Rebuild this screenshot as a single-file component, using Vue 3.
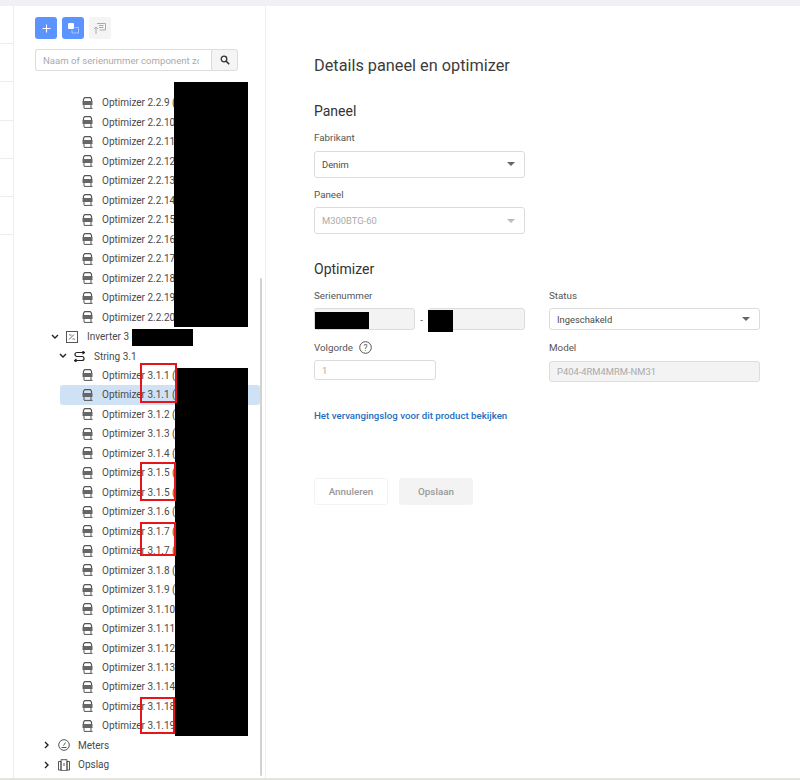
<script setup>
const tail = (prefix, from, to) => {
  const out = []
  for (let i = from; i <= to; i++) out.push(`Optimizer ${prefix}.${i}`)
  return out
}
const group1 = tail('2.2', 9, 20)
const group2 = [
  'Optimizer 3.1.1', 'Optimizer 3.1.1', 'Optimizer 3.1.2', 'Optimizer 3.1.3', 'Optimizer 3.1.4',
  'Optimizer 3.1.5', 'Optimizer 3.1.5', 'Optimizer 3.1.6', 'Optimizer 3.1.7', 'Optimizer 3.1.7',
  'Optimizer 3.1.8', 'Optimizer 3.1.9', 'Optimizer 3.1.10', 'Optimizer 3.1.11', 'Optimizer 3.1.12',
  'Optimizer 3.1.13', 'Optimizer 3.1.14', 'Optimizer 3.1.18', 'Optimizer 3.1.19'
]
const redactions = [
  { left: 174, top: 82, width: 74, height: 245 },
  { left: 132, top: 329, width: 61, height: 17 },
  { left: 175, top: 368, width: 73, height: 368 },
  { left: 315, top: 312, width: 54, height: 17 },
  { left: 428, top: 310, width: 25, height: 22 }
]
const marks = [
  { left: 140, top: 363, width: 37, height: 40 },
  { left: 140, top: 462, width: 36, height: 39 },
  { left: 140, top: 522, width: 36, height: 34 },
  { left: 140, top: 697, width: 35, height: 37 }
]
const box = (r) => ({ left: r.left + 'px', top: r.top + 'px', width: r.width + 'px', height: r.height + 'px' })
</script>

<template>
  <div class="page">
    <div class="topbar"></div>
    <div class="body">
      <div class="rail">
        <div class="rail-cell"></div>
        <div class="rail-cell"></div>
        <div class="rail-cell"></div>
        <div class="rail-cell"></div>
        <div class="rail-cell"></div>
        <div class="rail-cell"></div>
      </div>

      <aside class="side">
        <div class="tools">
          <button class="tool blue plus">
            <svg width="9" height="9" viewBox="0 0 9 9"><path d="M4.500 0.500v8M0.500 4.500h8" stroke="#fff" stroke-width="1.100" /></svg>
          </button>
          <button class="tool blue">
            <svg width="11" height="11" viewBox="0 0 11 11">
              <rect x="0" y="0" width="6" height="6" rx="1" fill="#fff" />
              <path d="M6.500 4.500h4v5.500h-6.500V7" fill="none" stroke="#fff" stroke-width="1" opacity=".45" />
            </svg>
          </button>
          <button class="tool grey">
            <svg width="12" height="11" viewBox="0 0 12 11">
              <path d="M3 .500h8.500v6.500H5.500" fill="none" stroke="#aaa" stroke-width="1" />
              <path d="M2 11V4.500M0 6l2-2 2 2M5 2.500h4.500M5 4.500h4.500" fill="none" stroke="#aaa" stroke-width="1" />
            </svg>
          </button>
        </div>
        <div class="search">
          <input class="search-input" placeholder="Naam of serienummer component zoeken" />
          <span class="search-btn">
            <svg width="10" height="10" viewBox="0 0 10 10">
              <circle cx="4" cy="4" r="2.800" fill="none" stroke="#333" stroke-width="1.300" />
              <path d="M6 6l3.200 3.200" stroke="#333" stroke-width="1.600" />
            </svg>
          </span>
        </div>

        <div class="tree">
          <div v-for="n in group1" :key="n" class="row leaf">
            <svg class="opt" width="11" height="12" viewBox="0 0 11 12">
              <path d="M1.500 4.500V2.200L2.700.700h5.600L9.500 2.200v2.300" fill="none" stroke="#555" stroke-width="1.200" />
              <rect x="0.500" y="4" width="10" height="4" fill="#666" />
              <path d="M2 8v3M9 8v3M2 11.400h8.500" fill="none" stroke="#555" stroke-width="1" />
            </svg>
            <span>{{ n }} (7</span>
          </div>

          <div class="row inverter">
            <svg class="chev" width="8" height="6" viewBox="0 0 8 6"><path d="M1 1l3 3 3-3" fill="none" stroke="#222" stroke-width="1.400" /></svg>
            <svg class="inv" width="12" height="12" viewBox="0 0 12 12">
              <rect x=".5" y=".5" width="11" height="11" fill="none" stroke="#555" />
              <path d="M3 8.500l5-5M3 4c1-1 1.500 1 2.500 0M6.500 8c1-1 1.500 1 2.500 0" fill="none" stroke="#555" stroke-width=".9" />
            </svg>
            <span>Inverter 3 (</span>
          </div>

          <div class="row string">
            <svg class="chev" width="8" height="6" viewBox="0 0 8 6"><path d="M1 1l3 3 3-3" fill="none" stroke="#222" stroke-width="1.400" /></svg>
            <svg class="str" width="11" height="11" viewBox="0 0 11 11">
              <path d="M10.500 1.500H3a1.800 1.800 0 0 0 0 4h5a1.800 1.800 0 0 1 0 4H.5M8.500 0l2 1.500-2 1.500M2.500 8l-2 1.500 2 1.500" fill="none" stroke="#222" stroke-width="1.200" />
            </svg>
            <span>String 3.1</span>
          </div>

          <div v-for="(n, i) in group2" :key="i" class="row leaf" :class="{ active: i === 1 }">
            <svg class="opt" width="11" height="12" viewBox="0 0 11 12">
              <path d="M1.500 4.500V2.200L2.700.700h5.600L9.500 2.200v2.300" fill="none" stroke="#555" stroke-width="1.200" />
              <rect x="0.500" y="4" width="10" height="4" fill="#666" />
              <path d="M2 8v3M9 8v3M2 11.400h8.500" fill="none" stroke="#555" stroke-width="1" />
            </svg>
            <span>{{ n }}{{ i < 12 ? ' (7' : '' }}</span>
          </div>

          <div class="row root">
            <svg class="chev-r" width="6" height="8" viewBox="0 0 6 8"><path d="M1 1l3 3-3 3" fill="none" stroke="#222" stroke-width="1.400" /></svg>
            <svg class="rooticon" width="12" height="12" viewBox="0 0 12 12">
              <circle cx="6" cy="6" r="5.300" fill="none" stroke="#555" />
              <path d="M3.500 8.500h5M5.500 6.500l2-3" fill="none" stroke="#555" />
            </svg>
            <span>Meters</span>
          </div>
          <div class="row root">
            <svg class="chev-r" width="6" height="8" viewBox="0 0 6 8"><path d="M1 1l3 3-3 3" fill="none" stroke="#222" stroke-width="1.400" /></svg>
            <svg class="rooticon" width="12" height="12" viewBox="0 0 12 12">
              <path d="M3 2.500H.5v8.500H3zM3 .7h6v11H3zM9 2.500h2.500v8.500H9zM6 4v3" fill="none" stroke="#555" />
            </svg>
            <span>Opslag</span>
          </div>
        </div>

        <div class="scrollbar"></div>
      </aside>

      <main class="main">
        <h1>Details paneel en optimizer</h1>

        <h2>Paneel</h2>
        <div class="narrow">
          <label>Fabrikant</label>
          <div class="field select">Denim<i class="caret"></i></div>
          <label class="second">Paneel</label>
          <div class="field select muted lower">M300BTG-60<i class="caret light"></i></div>
        </div>

        <h2 class="opt-title">Optimizer</h2>
        <div class="cols">
          <div class="col">
            <label>Serienummer</label>
            <div class="serial">
              <div class="field filled s1"></div>
              <span class="dash">-</span>
              <div class="field filled s2"></div>
            </div>
            <label class="second2">Volgorde
              <svg class="help" width="13" height="13" viewBox="0 0 13 13">
                <circle cx="6.500" cy="6.500" r="5.800" fill="none" stroke="#555" />
                <text x="6.500" y="9.500" text-anchor="middle" font-size="8.500" fill="#555" font-family="Roboto, sans-serif">?</text>
              </svg>
            </label>
            <div class="field short muted">1</div>
          </div>
          <div class="col">
            <label>Status</label>
            <div class="field select status">Ingeschakeld<i class="caret"></i></div>
            <label class="second2 model">Model</label>
            <div class="field filled muted tight">P404-4RM4MRM-NM31</div>
          </div>
        </div>

        <a class="log">Het vervangingslog voor dit product bekijken</a>

        <div class="actions">
          <button class="btn ghost">Annuleren</button>
          <button class="btn solid">Opslaan</button>
        </div>
      </main>
    </div>
    <div class="bottomline"></div>

    <div v-for="(r, i) in redactions" :key="'r' + i" class="redact" :style="box(r)"></div>
    <div v-for="(r, i) in marks" :key="'m' + i" class="mark" :style="box(r)"></div>
  </div>
</template>

<style>
html, body { margin: 0; background: #fff; }
</style>

<style scoped>
.page {
  position: relative;
  width: 800px;
  height: 780px;
  overflow: hidden;
  font-family: Roboto, "Liberation Sans", sans-serif;
  color: #444;
  background: #fff;
}
.topbar { height: 6px; background: #f0f1f5; }
.body { display: flex; height: 772px; }
.bottomline { height: 2px; background: #e4e4e0; }

.rail { width: 13px; border-right: 1px solid #eceef2; flex: none; }
.rail-cell { height: 38.200px; box-sizing: border-box; border-bottom: 1px solid #ececec; }

.side {
  position: relative;
  width: 251px;
  flex: none;
  border-right: 1px solid #eceef2;
  overflow: hidden;
}
.tools { display: flex; gap: 5px; padding: 11px 0 0 21px; }
.tool {
  width: 22px;
  height: 22px;
  padding: 0;
  border: 0;
  border-radius: 3px;
  display: flex;
  align-items: center;
  justify-content: center;
}
.blue { background: #5b93ff; color: #fff; }
.grey { background: #f4f4f4; }

.search { display: flex; width: 203px; height: 22px; margin: 10px 0 0 21px; }
.search-input {
  flex: 1;
  min-width: 0;
  box-sizing: border-box;
  height: 22px;
  padding: 0 12px 0 7px;
  border: 1px solid #dcdcdc;
  border-right: 0;
  border-radius: 3px 0 0 3px;
  font: 9.600px Roboto, sans-serif;
  outline: 0;
}
.search-input::placeholder { color: #aaa; opacity: 1; }
.search-btn {
  width: 27px;
  box-sizing: border-box;
  border: 1px solid #dcdcdc;
  border-radius: 0 3px 3px 0;
  background: #f5f5f5;
  display: flex;
  align-items: center;
  justify-content: center;
}

.tree { margin-top: 22.200px; }
.row {
  height: 19.470px;
  display: flex;
  align-items: center;
  font-size: 10px;
  color: #4a4a4a;
  white-space: nowrap;
  box-sizing: border-box;
}
.leaf { padding-left: 68px; }
.opt { margin-right: 9px; flex: none; }
.inverter { padding-left: 37px; }
.inverter .inv { margin: 0 9px 0 7px; }
.string { padding-left: 45px; }
.string .str { margin: 0 9px 0 7px; }
.active { background: #cfe2f5; margin-left: 46px; padding-left: 22px; width: 200px; border-radius: 3px; }
.root { padding-left: 30px; }
.rooticon { margin: 0 8px 0 8px; flex: none; }

.scrollbar {
  position: absolute;
  left: 245.500px;
  top: 272px;
  width: 2.500px;
  height: 498px;
  background: #d2d2d2;
  border-radius: 2px;
}

.main { flex: 1; padding: 0 0 0 48px; }
h1 { margin: 50px 0 0; font-size: 16.300px; font-weight: 400; line-height: 20px; color: #3c3c3c; }
h2 { margin: 25.500px 0 0; font-size: 14px; font-weight: 400; line-height: 18px; color: #333; }
.opt-title { margin-top: 25.500px; }
label { display: block; font-size: 9.800px; line-height: 12px; color: #555; }
.narrow { width: 211px; margin-top: 12px; }
.narrow .field { margin-top: 7px; height: 27px; }
.narrow .lower { margin-top: 6px; }
.second { margin-top: 11.500px; }
.field {
  position: relative;
  box-sizing: border-box;
  height: 21px;
  border: 1px solid #dcdcdc;
  border-radius: 3px;
  padding: 0 7px;
  display: flex;
  align-items: center;
  font-size: 9.400px;
  color: #4a4a4a;
  background: #fff;
}
.muted { color: #aaa; }
.filled { background: #f3f3f3; }
.caret {
  position: absolute;
  right: 9px;
  top: 50%;
  margin-top: -2px;
  border-left: 4px solid transparent;
  border-right: 4px solid transparent;
  border-top: 4px solid #666;
}
.caret.light { border-top-color: #bbb; }
.cols { display: flex; gap: 24px; margin-top: 12.500px; }
.col { width: 211px; }
.serial { display: flex; align-items: center; margin-top: 6px; }
.s1 { width: 101px; height: 22px; }
.s2 { width: 97px; height: 22px; }
.dash { width: 13px; text-align: center; font-size: 9.400px; }
.second2 { margin-top: 11px; display: flex; align-items: center; gap: 6px; }
.model { margin-top: 12px; }
.short { width: 122px; margin-top: 6px; height: 20px; }
.status { margin-top: 6px; height: 22px; }
.tight { margin-top: 7px; height: 21px; }
.log {
  display: block;
  margin-top: 27px;
  font-size: 9.700px;
  font-weight: 500;
  color: #1e6fc0;
  line-height: 13px;
}
.actions { display: flex; gap: 11px; margin-top: 56px; }
.btn {
  width: 74px;
  height: 27px;
  padding: 0;
  border-radius: 3px;
  font: 500 9.800px Roboto, sans-serif;
  color: #999;
}
.ghost { background: #fff; border: 1px solid #f3f3f3; }
.solid { background: #f3f3f3; border: 0; }

.redact { position: absolute; background: #000; }
.mark { position: absolute; box-sizing: border-box; border: 2px solid #e8141c; }
</style>
